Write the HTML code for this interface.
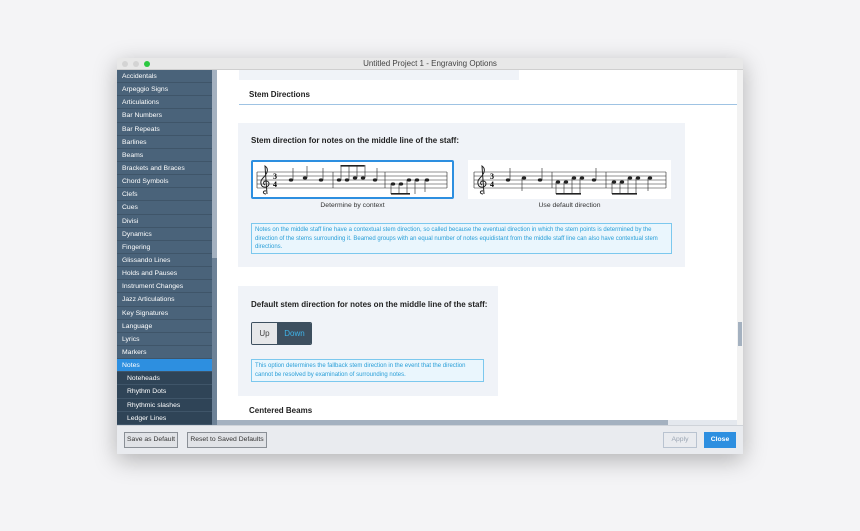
<!DOCTYPE html>
<html><head><meta charset="utf-8"><style>
*{margin:0;padding:0;box-sizing:border-box}
body{width:860px;height:531px;background:#f4f4f6;font-family:"Liberation Sans",sans-serif;position:relative;overflow:hidden}
.win{position:absolute;left:117px;top:58px;width:626px;height:396px;background:#fff;box-shadow:0 6px 22px rgba(0,0,0,.28);}
.title{position:absolute;left:0;top:0;width:626px;height:12px;background:#e8e8e8;border-bottom:1px solid #cfcfcf;font-size:8px;color:#444;text-align:center;line-height:12px}
.dot{position:absolute;top:3px;width:6px;height:6px;border-radius:50%;background:#d4d4d4}
.side{position:absolute;left:0;top:12px;width:95px;height:355px;background:#4a637a;overflow:hidden}
.side div{height:13.15px;line-height:13px;font-size:6.8px;color:#fff;padding-left:5px;border-bottom:1px solid #3f5569}
.side div.sel{background:#2d8fe0}
.side div.sub{background:#2f4457;padding-left:10px}
.sscroll{position:absolute;left:95px;top:12px;width:5px;height:355px;background:#6d8297}
.sscroll i{position:absolute;left:0;top:0;width:5px;height:188px;background:#a4b1c0}
.content{position:absolute;left:100px;top:12px;width:520px;height:350px;overflow:hidden}
.vs{position:absolute;left:620px;top:12px;width:6px;height:355px;background:#f2f2f2}
.vs i{position:absolute;left:1px;top:252px;width:4px;height:24px;background:#a4b1c0}
.hs{position:absolute;left:100px;top:362px;width:520px;height:5px;background:#e4e8ee}
.hs i{position:absolute;left:0;top:0;width:451px;height:5px;background:#a4b1c0}
.bottom{position:absolute;left:0;top:367px;width:626px;height:29px;background:#e9ebef;border-top:1px solid #cfd3d9}
.btn{position:absolute;top:6px;height:16px;border:1px solid #8a8f96;background:#e0e2e6;font-size:6.8px;color:#333;text-align:center;line-height:14px}
.panel{position:absolute;background:#f0f3f8}
.h{position:absolute;font-weight:bold;color:#222;font-size:8px}
.info{position:absolute;border:1px solid #7cc8ee;background:#eaf6fd;color:#2a9fd8;font-size:6px;line-height:8.5px;padding:2px 3px}
.box{position:absolute;width:203px;height:39px;background:#fff}
.cap{position:absolute;font-size:6.8px;color:#333;text-align:center;width:203px}
</style></head><body>
<div class="win">
 <div class="title"><span class="dot" style="left:5px"></span><span class="dot" style="left:16px"></span><span class="dot" style="left:27px;background:#2bc840"></span>Untitled Project 1 - Engraving Options</div>
 <div class="side">
  <div>Accidentals</div><div>Arpeggio Signs</div><div>Articulations</div><div>Bar Numbers</div><div>Bar Repeats</div><div>Barlines</div><div>Beams</div><div>Brackets and Braces</div><div>Chord Symbols</div><div>Clefs</div><div>Cues</div><div>Divisi</div><div>Dynamics</div><div>Fingering</div><div>Glissando Lines</div><div>Holds and Pauses</div><div>Instrument Changes</div><div>Jazz Articulations</div><div>Key Signatures</div><div>Language</div><div>Lyrics</div><div>Markers</div><div class="sel">Notes</div><div class="sub">Noteheads</div><div class="sub">Rhythm Dots</div><div class="sub">Rhythmic slashes</div><div class="sub">Ledger Lines</div>
 </div>
 <div class="sscroll"><i></i></div>
 <div class="content">
  <div class="panel" style="left:22px;top:0;width:280px;height:10px"></div>
  <div class="h" style="left:32px;top:20px">Stem Directions</div>
  <div style="position:absolute;left:22px;top:34px;width:498px;height:1px;background:#9fc3e3"></div>
  <div class="panel" style="left:21px;top:53px;width:447px;height:144px"></div>
  <div class="h" style="left:34px;top:66px">Stem direction for notes on the middle line of the staff:</div>
  <div class="box" style="left:34px;top:90px;border:2px solid #2d8fe0;border-radius:2px">
   <svg width="199" height="35" viewBox="2 2 199 35" style="position:absolute;left:0;top:0">
    <g stroke="#222" stroke-width=".6"><line x1="6" y1="12" x2="196" y2="12"/><line x1="6" y1="16" x2="196" y2="16"/><line x1="6" y1="20" x2="196" y2="20"/><line x1="6" y1="24" x2="196" y2="24"/><line x1="6" y1="28" x2="196" y2="28"/>
    <line x1="6" y1="12" x2="6" y2="28"/><line x1="82" y1="12" x2="82" y2="28"/><line x1="134" y1="12" x2="134" y2="28"/><line x1="196" y1="12" x2="196" y2="28"/></g>
    <path d="M15 34 C11 34 12 30 15 31 M16 34 L14 6 C17 8 18 12 12 18 C8 22 10 28 15 27 C19 26 19 21 15 21 C12 21 12 24 14 25" fill="none" stroke="#222" stroke-width="1"/>
    <text x="22" y="19" font-size="8" font-weight="bold" font-family="Liberation Serif">3</text><text x="22" y="27" font-size="8" font-weight="bold" font-family="Liberation Serif">4</text>
    <g fill="#222"><ellipse cx="40" cy="20" rx="2.2" ry="1.6"/><ellipse cx="54" cy="18" rx="2.2" ry="1.6"/><ellipse cx="70" cy="20" rx="2.2" ry="1.6"/>
    <ellipse cx="88" cy="20" rx="2.2" ry="1.6"/><ellipse cx="96" cy="20" rx="2.2" ry="1.6"/><ellipse cx="104" cy="18" rx="2.2" ry="1.6"/><ellipse cx="112" cy="18" rx="2.2" ry="1.6"/><ellipse cx="124" cy="20" rx="2.2" ry="1.6"/>
    <ellipse cx="142" cy="24" rx="2.2" ry="1.6"/><ellipse cx="150" cy="24" rx="2.2" ry="1.6"/><ellipse cx="158" cy="20" rx="2.2" ry="1.6"/><ellipse cx="166" cy="20" rx="2.2" ry="1.6"/><ellipse cx="176" cy="20" rx="2.2" ry="1.6"/>
    <rect x="89.5" y="5" width="24" height="1.6"/><rect x="140" y="33" width="19" height="1.6"/></g>
    <g stroke="#222" stroke-width=".6"><line x1="42" y1="20" x2="42" y2="8"/><line x1="56" y1="18" x2="56" y2="6"/><line x1="72" y1="20" x2="72" y2="8"/>
    <line x1="90" y1="20" x2="90" y2="5"/><line x1="98" y1="20" x2="98" y2="5"/><line x1="106" y1="18" x2="106" y2="5"/><line x1="114" y1="18" x2="114" y2="5"/><line x1="126" y1="20" x2="126" y2="8"/>
    <line x1="140" y1="24" x2="140" y2="34"/><line x1="148" y1="24" x2="148" y2="34"/><line x1="156" y1="20" x2="156" y2="34"/><line x1="164" y1="20" x2="164" y2="34"/><line x1="174" y1="20" x2="174" y2="32"/></g>
   </svg>
  </div>
  <div class="cap" style="left:34px;top:132px">Determine by context</div>
  <div class="box" style="left:251px;top:90px">
   <svg width="203" height="39" viewBox="0 0 203 39" style="position:absolute;left:0;top:0">
    <g stroke="#222" stroke-width=".6"><line x1="6" y1="12" x2="198" y2="12"/><line x1="6" y1="16" x2="198" y2="16"/><line x1="6" y1="20" x2="198" y2="20"/><line x1="6" y1="24" x2="198" y2="24"/><line x1="6" y1="28" x2="198" y2="28"/>
    <line x1="6" y1="12" x2="6" y2="28"/><line x1="84" y1="12" x2="84" y2="28"/><line x1="138" y1="12" x2="138" y2="28"/><line x1="198" y1="12" x2="198" y2="28"/></g>
    <path d="M15 34 C11 34 12 30 15 31 M16 34 L14 6 C17 8 18 12 12 18 C8 22 10 28 15 27 C19 26 19 21 15 21 C12 21 12 24 14 25" fill="none" stroke="#222" stroke-width="1"/>
    <text x="22" y="19" font-size="8" font-weight="bold" font-family="Liberation Serif">3</text><text x="22" y="27" font-size="8" font-weight="bold" font-family="Liberation Serif">4</text>
    <g fill="#222"><ellipse cx="40" cy="20" rx="2.2" ry="1.6"/><ellipse cx="56" cy="18" rx="2.2" ry="1.6"/><ellipse cx="72" cy="20" rx="2.2" ry="1.6"/>
    <ellipse cx="90" cy="22" rx="2.2" ry="1.6"/><ellipse cx="98" cy="22" rx="2.2" ry="1.6"/><ellipse cx="106" cy="18" rx="2.2" ry="1.6"/><ellipse cx="114" cy="18" rx="2.2" ry="1.6"/><ellipse cx="126" cy="20" rx="2.2" ry="1.6"/>
    <ellipse cx="146" cy="22" rx="2.2" ry="1.6"/><ellipse cx="154" cy="22" rx="2.2" ry="1.6"/><ellipse cx="162" cy="18" rx="2.2" ry="1.6"/><ellipse cx="170" cy="18" rx="2.2" ry="1.6"/><ellipse cx="182" cy="18" rx="2.2" ry="1.6"/>
    <rect x="88" y="33" width="25" height="1.6"/><rect x="144" y="33" width="25" height="1.6"/></g>
    <g stroke="#222" stroke-width=".6"><line x1="42" y1="20" x2="42" y2="8"/><line x1="54" y1="18" x2="54" y2="31"/><line x1="74" y1="20" x2="74" y2="8"/>
    <line x1="88" y1="22" x2="88" y2="34"/><line x1="96" y1="22" x2="96" y2="34"/><line x1="104" y1="18" x2="104" y2="34"/><line x1="112" y1="18" x2="112" y2="34"/><line x1="128" y1="20" x2="128" y2="8"/>
    <line x1="144" y1="22" x2="144" y2="34"/><line x1="152" y1="22" x2="152" y2="34"/><line x1="160" y1="18" x2="160" y2="34"/><line x1="168" y1="18" x2="168" y2="34"/><line x1="180" y1="18" x2="180" y2="31"/></g>
   </svg>
  </div>
  <div class="cap" style="left:251px;top:132px">Use default direction</div>
  <div class="info" style="left:34px;top:153px;width:421px;height:31px">Notes on the middle staff line have a contextual stem direction, so called because the eventual direction in which the stem points is determined by the direction of the stems surrounding it. Beamed groups with an equal number of notes equidistant from the middle staff line can also have contextual stem directions.</div>
  <div class="panel" style="left:21px;top:216px;width:260px;height:110px"></div>
  <div class="h" style="left:34px;top:230px">Default stem direction for notes on the middle line of the staff:</div>
  <div style="position:absolute;left:34px;top:252px;width:61px;height:23px;border:1px solid #3d4f5f;border-radius:2px;overflow:hidden;font-size:8px">
   <div style="position:absolute;left:0;top:0;width:25px;height:21px;background:#e6e7e9;color:#444;text-align:center;line-height:21px">Up</div>
   <div style="position:absolute;left:25px;top:0;width:35px;height:21px;background:#3d4f5f;color:#3fb4ea;text-align:center;line-height:21px">Down</div>
  </div>
  <div class="info" style="left:34px;top:289px;width:233px;height:23px">This option determines the fallback stem direction in the event that the direction cannot be resolved by examination of surrounding notes.</div>
  <div class="h" style="left:32px;top:336px">Centered Beams</div>
 </div>
 <div class="vs"><i></i></div>
 <div class="hs"><i></i></div>
 <div class="bottom">
  <div class="btn" style="left:7px;width:54px">Save as Default</div>
  <div class="btn" style="left:70px;width:80px">Reset to Saved Defaults</div>
  <div class="btn" style="left:546px;width:34px;border-color:#b9c3d0;color:#9aa5b3;background:#e9ebef">Apply</div>
  <div class="btn" style="left:587px;width:32px;border-color:#2d8fe0;background:#2d8fe0;color:#fff;font-weight:bold">Close</div>
 </div>
</div>
</body></html>
